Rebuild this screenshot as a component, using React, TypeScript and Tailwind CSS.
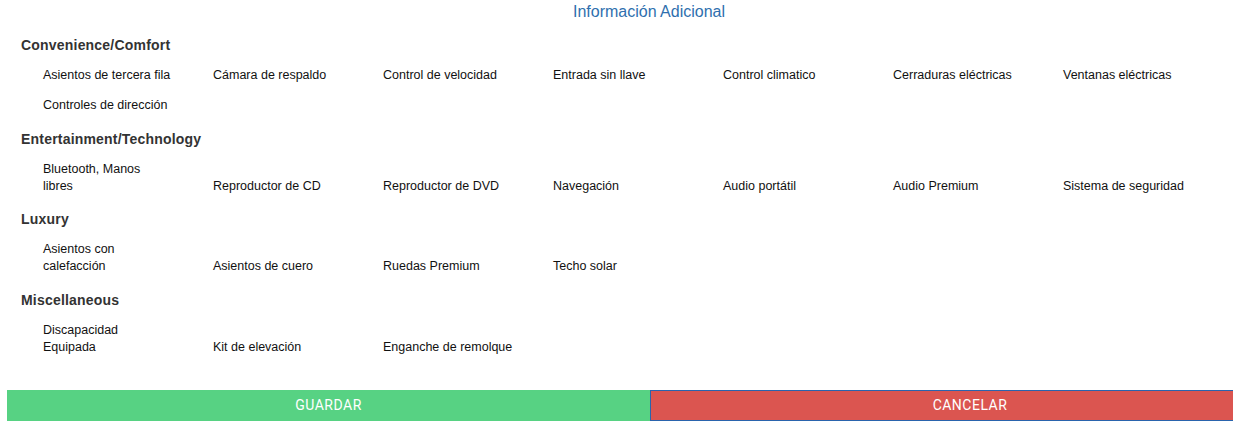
import React from "react";

interface Section {
  title: string;
  items: string[];
}

// "\n" marks where the original column wraps the label
const sections: Section[] = [
  {
    title: "Convenience/Comfort",
    items: [
      "Asientos de tercera fila",
      "Cámara de respaldo",
      "Control de velocidad",
      "Entrada sin llave",
      "Control climatico",
      "Cerraduras eléctricas",
      "Ventanas eléctricas",
      "Controles de dirección",
    ],
  },
  {
    title: "Entertainment/Technology",
    items: [
      "Bluetooth, Manos\nlibres",
      "Reproductor de CD",
      "Reproductor de DVD",
      "Navegación",
      "Audio portátil",
      "Audio Premium",
      "Sistema de seguridad",
    ],
  },
  {
    title: "Luxury",
    items: ["Asientos con\ncalefacción", "Asientos de cuero", "Ruedas Premium", "Techo solar"],
  },
  {
    title: "Miscellaneous",
    items: ["Discapacidad\nEquipada", "Kit de elevación", "Enganche de remolque"],
  },
];

export default function App() {
  return (
    <div className="w-full overflow-hidden bg-white">
      <div className="w-[1298px] font-['Liberation_Sans',Arial,sans-serif] text-[#333]">
        <h2 className="pt-[2px] text-center text-[16px] leading-[20px] text-[#2f6fae]">
          Información Adicional
        </h2>

        <div className="pt-[14px]">
          {sections.map((section, i) => (
            <div key={section.title} className={i > 0 ? "mt-[9.7px]" : ""}>
              <h3 className="pl-[21px] text-[14px] font-bold leading-[18px] tracking-[0.2px] text-[#333]">
                {section.title}
              </h3>
              {/* Items in each row sit on the same line, wrapped labels grow upward */}
              <div className="mt-[6px] flex flex-wrap items-end pl-[43px]">
                {section.items.map((item) => (
                  <div key={item} className="w-[170px] pt-[7px] pb-[6px]">
                    <span className="block whitespace-pre-line text-[12.5px] leading-[17px] text-[#111]">
                      {item}
                    </span>
                  </div>
                ))}
              </div>
            </div>
          ))}
        </div>

        {/* Actions */}
        <div className="mt-[28px] flex px-[7px] font-['Roboto',Arial,sans-serif] text-[14px] tracking-[0.5px] text-white">
          <button className="h-[31px] w-[643px] bg-[#57d283] uppercase">Guardar</button>
          <button className="h-[31px] w-[640px] border border-[#2a64ad] bg-[#db5550] uppercase">
            Cancelar
          </button>
        </div>
      </div>
    </div>
  );
}
